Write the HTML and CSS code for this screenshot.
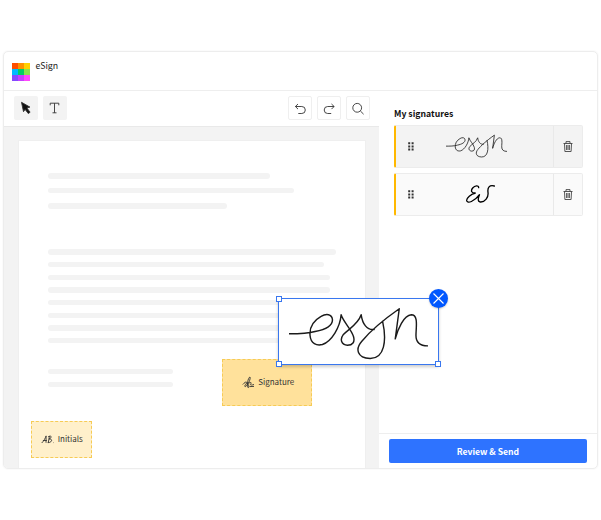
FILE: index.html
```html
<!DOCTYPE html>
<html lang="en">
<head>
<meta charset="utf-8">
<title>eSign</title>
<link rel="stylesheet" href="styles.css">
</head>
<body>
<svg width="0" height="0" class="defs">
  <symbol id="sig" viewBox="72 80 416 158"><path d="M72 160C100 160 125 160 150 153C180 147 203 135 202 117C200 101 184 98 168 108C145 121 133 142 135 165C137 190 155 196 172 192C200 182 225 140 228 103C235 125 258 145 265 168C270 185 262 194 247 194C228 192 224 176 234 163C250 145 278 133 288 103C292 130 305 150 327 147M352 122C365 180 358 234 315 234C275 232 270 205 290 182C310 158 345 125 402 85L390 175C398 145 415 105 438 103C460 103 452 140 452 165C452 187 465 196 487 196"/></symbol>
  <symbol id="trash" viewBox="0 0 10 11"><path d="M.5 2.5h9M3 2.3V.6h4v1.7M1.5 2.5l.4 8h6.2l.4-8M3.6 4v5M5 4v5M6.4 4v5"/></symbol>
  <symbol id="grip" viewBox="0 0 6 9"><path d="M.2.2h2v2h-2zM3.6.2h2v2h-2zM.2 3.4h2v2h-2zM3.6 3.4h2v2h-2zM.2 6.6h2v2h-2zM3.6 6.6h2v2h-2z"/></symbol>
</svg>
<div class="app">
  <header class="header">
    <div class="logo"><i></i><i></i><i></i><i></i><i></i><i></i><i></i><i></i><i></i></div>
    <span class="name">eSign</span>
  </header>
  <div class="body">
    <main class="editor">
      <div class="toolbar">
        <button class="tool filled"><svg width="24" height="24" viewBox="0 0 24 24"><path fill="#111" d="M7.5 6.3l8.4 4.8-3 .9 3.2 4.2-1.8 1.4-3.2-4.2-1.6 2.3z"/></svg></button>
        <button class="tool filled"><svg width="24" height="24" viewBox="0 0 24 24"><path d="M7.2 9.3V7.2h8.6v2.1M11.5 7.2v9.6M9.5 16.8h4"/></svg></button>
        <span class="spacer"></span>
        <button class="tool"><svg width="24" height="24" viewBox="0 0 24 24"><path d="M9 7L6.4 9.5l2.6 2.6M6.4 9.5h6.4a3.5 3.5 0 0 1 0 7H9.3"/></svg></button>
        <button class="tool"><svg width="24" height="24" viewBox="0 0 24 24"><path d="M13.5 7l2.6 2.5-2.6 2.6M16.1 9.5H9.7a3.5 3.5 0 0 0 0 7h3.5"/></svg></button>
        <button class="tool"><svg width="24" height="24" viewBox="0 0 24 24"><circle cx="10.2" cy="10.8" r="4.4"/><path d="M13.4 14l3.2 3.2"/></svg></button>
      </div>
      <div class="canvas">
        <div class="page">
          <div class="lines intro"><i class="a"></i><i class="b"></i><i class="c"></i></div>
          <div class="lines para"><i class="d"></i><i class="e"></i><i class="f"></i><i class="f"></i><i class="f"></i><i class="f"></i><i class="f"></i><i class="f"></i></div>
          <div class="lines end"><i class="g"></i><i class="g"></i></div>
        </div>
      </div>
    </main>
    <aside class="side">
      <h2>My signatures</h2>
      <div class="card active"><svg class="grip" width="6" height="9"><use href="#grip"/></svg><div class="preview"><svg class="sig small" width="61" height="24"><use href="#sig"/></svg></div><div class="del"><svg width="10" height="11"><use href="#trash"/></svg></div></div>
      <div class="card"><svg class="grip" width="6" height="9"><use href="#grip"/></svg><div class="preview es"><svg width="30" height="20" viewBox="30 18 90 60"><path d="M71 29C71 21 60 22 53 30C46 39 50 46 62 45C48 48 34 60 35 68C37 78 58 71 74 49C69 59 67 71 76 72C90 73 101 58 99 43C97 29 103 20 118 24"/></svg></div><div class="del"><svg width="10" height="11"><use href="#trash"/></svg></div></div>
      <footer><button class="send">Review &amp; Send</button></footer>
    </aside>
  </div>
</div>
<div class="field signature"><svg width="13" height="13" viewBox="0 0 13 13"><path d="M.8 8.5C3 6 5 5 4.6 7C3.8 9 1.8 10.2 3.2 10.6C6 10 9 2 8 1C6 1.3 4.5 10 6 11.6C7.3 12 7 8.4 5 7.3C8 7 9.5 5.5 9 7.5C7.6 9 8.8 9.5 12 8.5M7.5 10.6L12 10.4"/></svg>Signature</div>
<div class="field initials"><svg width="13" height="9" viewBox="0 0 13 9"><path d="M.7 8C3 6 4.3 3 5.1.9L5 7.7M1.9 5.5h4M8.4 1L7.3 7.7M7.2 1.7C10 .2 12 2 8 4C12 3.7 11.3 7.4 7 7.7M5.9 7.6h.4M12 7.6h.4"/></svg>Initials</div>
<div class="selection">
  <svg class="sig" width="139" height="53"><use href="#sig"/></svg>
  <b class="tl"></b><b class="bl"></b><b class="br"></b>
  <button class="close"><svg width="19" height="19" viewBox="0 0 19 19"><path d="M4.5 4.5l10 10M14.5 4.5l-10 10"/></svg></button>
</div>
</body>
</html>
```
FILE: styles.css
```css
* { box-sizing: border-box; }
body { margin: 0; width: 601px; height: 520px; padding: 51px 3px 0; background: #fff; overflow: hidden; position: relative; font: 9px/12px "Noto Sans CJK JP", sans-serif; color: #222; }
.defs { position: absolute; }
svg { display: block; fill: none; stroke: #333; stroke-width: .9; }
button { border: 0; padding: 0; font: inherit; }
.app { width: 595px; height: 418px; border: 1px solid #ededed; border-radius: 5px; overflow: hidden; box-shadow: 0 0 2px #eee; display: flex; flex-direction: column; }
.header { height: 39.4px; border-bottom: 1px solid #eee; display: flex; padding: 11px 8px; gap: 5.5px; flex: none; }
.logo { width: 18px; height: 18px; display: grid; grid-template-columns: repeat(3, 6px); grid-auto-rows: 6px; }
.logo i:nth-child(1) { background: #ff4f00; }
.logo i:nth-child(2) { background: #ff9100; }
.logo i:nth-child(3) { background: #ffd000; }
.logo i:nth-child(4) { background: #00b9ff; }
.logo i:nth-child(5) { background: #00cf65; }
.logo i:nth-child(6) { background: #87e64b; }
.logo i:nth-child(7) { background: #8549ff; }
.logo i:nth-child(8) { background: #c63fff; }
.logo i:nth-child(9) { background: #ff49fc; }
.name { margin-top: -3px; font-size: 8.8px; }
.body { flex: 1; display: flex; min-height: 0; }
.editor { width: 375.4px; display: flex; flex-direction: column; }
.toolbar { height: 35.6px; border-bottom: 1px solid #e9e9e9; display: flex; gap: 5px; padding: 4.5px 9.6px; flex: none; }
.tool { width: 24px; height: 24px; border: 1px solid #efefef; border-radius: 2px; background: #fff; display: grid; place-items: center; }
.filled { border: 0; background: #f3f3f3; }
.spacer { flex: 1; }
.canvas { flex: 1; background: #f3f3f3; padding: 13px 13.5px 0 14px; }
.page { height: 100%; background: #fff; border: 1px solid #efefef; border-bottom: 0; padding: 32.4px 29px 0; }
.lines { display: flex; flex-direction: column; }
.lines i { height: 5.3px; border-radius: 3px; background: #f3f3f3; flex: none; }
.intro { gap: 9.2px; }
.intro .c { margin-top: 1px; }
.para { margin-top: 40.6px; gap: 7.4px; }
.end { margin-top: 25.7px; gap: 7.2px; }
.a { width: 222px; } .b { width: 246px; } .c { width: 179px; }
.d { width: 288px; } .e { width: 276px; } .f { width: 282px; } .g { width: 125px; }
.side { flex: 1; display: flex; flex-direction: column; }
h2 { margin: 16.5px 0 5px 14.6px; font-size: 8.7px; line-height: 12px; font-weight: 700; color: #111; }
.card { width: 189px; height: 43px; margin: 0 0 5px 14.6px; border: 1px solid #ececec; border-left: 2px solid #ffb800; border-radius: 2px; background: #fafafa; display: flex; align-items: center; flex: none; }
.card.active { background: #f3f3f3; }
.grip { margin-left: 12px; fill: #333; stroke: none; }
.preview { flex: 1; display: grid; place-items: center; padding-right: 13px; }
.sig { stroke: #1b1b1b; stroke-width: 4.3; overflow: visible; stroke-linejoin: round; stroke-linecap: round; }
.sig.small { stroke-width: 5.5; }
.preview.es { padding-right: 6px; padding-bottom: 1px; }
.es svg { stroke: #000; stroke-width: 4; stroke-linecap: round; }
.del { width: 29px; height: 100%; border-left: 1px solid #e9e9e9; display: grid; place-items: center; }
.del svg { stroke: #444; stroke-width: .9; margin-left: 1px; }
footer { margin-top: auto; height: 35px; border-top: 1px solid #eee; padding: 5px 9.5px 0; }
.send { width: 198px; height: 24px; background: #2e73ff; color: #fff; border-radius: 2px; font-size: 8.6px; font-weight: 700; display: block; }
.field { position: absolute; display: flex; align-items: center; justify-content: center; gap: 3.5px; border: 1px dashed #f6cb55; color: #333; font-size: 8px; padding-bottom: 1px; }
.field.signature { left: 222px; top: 359px; width: 90px; height: 47px; background: #ffe19b; padding-left: 2px; }
.field.initials { left: 31px; top: 421px; width: 61px; height: 37px; background: #fff0cb; padding-left: 1px; }
.selection { position: absolute; left: 278px; top: 298px; width: 161px; height: 67px; background: #fff; border: 1px solid #3977ef; box-shadow: 0 2px 3px #0003; padding: 8px 0 0 10px; }
.selection b { position: absolute; width: 6px; height: 6px; background: #fff; border: 1px solid #3977ef; }
.tl { left: -3px; top: -3px; }
.bl { left: -3px; bottom: -3px; }
.br { right: -3px; bottom: -3px; }
.close { position: absolute; right: -10px; top: -10px; width: 19px; height: 19px; border-radius: 50%; background: #0057ff; box-shadow: 0 1px 2px #0003; }
.close svg { stroke: #fff; stroke-width: 1.1; }
```
